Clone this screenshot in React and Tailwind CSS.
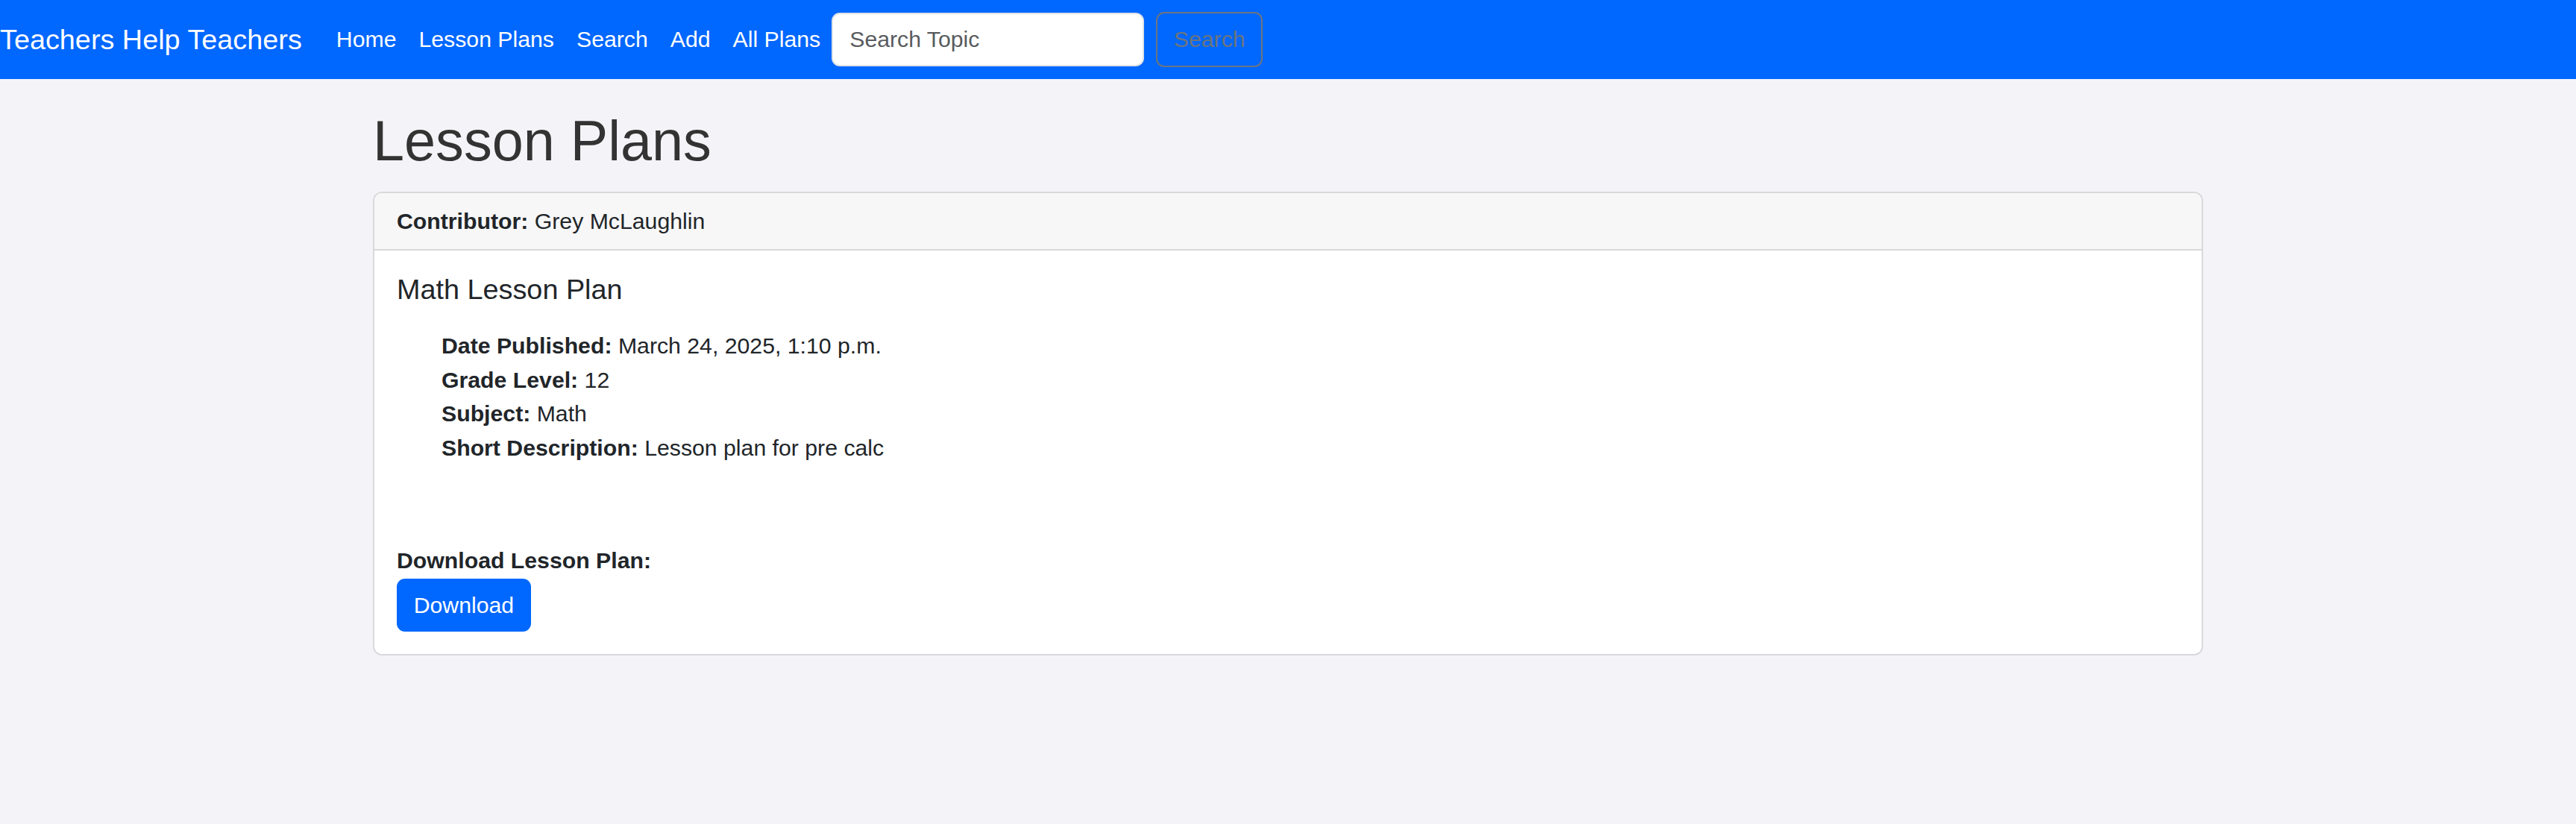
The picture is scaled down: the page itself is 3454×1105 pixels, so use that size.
import React from 'react';

const links = ['Home', 'Lesson Plans', 'Search', 'Add', 'All Plans'];

const details = [
  ['Date Published:', 'March 24, 2025, 1:10 p.m.'],
  ['Grade Level:', '12'],
  ['Subject:', 'Math'],
  ['Short Description:', 'Lesson plan for pre calc'],
];

export default function App() {
  return (
    <div className="min-h-screen bg-[#f4f4f8] text-[#212529] font-['Liberation_Sans',Arial,sans-serif]">
      {/* NAVBAR */}
      <nav className="h-[106px] bg-[#0067ff] flex items-center">
        <a href="#" className="text-[37.8px] leading-[56.7px] text-white mr-[31px] whitespace-nowrap">
          Teachers Help Teachers
        </a>
        <ul className="flex items-center">
          {links.map(l => (
            <li key={l}>
              <a href="#" className="block px-[15px] text-[30.24px] leading-[45.4px] text-white whitespace-nowrap">{l}</a>
            </li>
          ))}
        </ul>
        <form className="flex items-center" onSubmit={e => e.preventDefault()}>
          <input type="text" placeholder="Search Topic"
            className="w-[419px] h-[72px] bg-white rounded-[11px] border-[2px] border-[#dee2e6] px-[22px] text-[30.24px] text-[#212529] placeholder-[#595c5f] outline-none" />
          <button type="submit"
            className="ml-[16px] w-[143px] h-[74px] rounded-[11px] border-[2px] border-[#6c757d] text-[30.24px] text-[#6c757d] bg-transparent">
            Search
          </button>
        </form>
      </nav>

      {/* CONTENT */}
      <main className="max-w-[2496px] mx-auto px-[21px]">
        <h1 className="mt-[38px] mb-[22px] text-[75.6px] leading-[1.2] text-[#333]">Lesson Plans</h1>

        <div className="bg-white border-[2px] border-[#d9d9dc] rounded-[12px] overflow-hidden">
          <div className="bg-[#f7f7f7] border-b-[2px] border-[#d9d9dc] px-[30px] py-[15px] text-[30.24px] leading-[45.4px]">
            <strong className="font-bold">Contributor:</strong> Grey McLaughlin
          </div>
          <div className="px-[30px] pt-[30px] pb-[30px] text-[30.24px] leading-[45.4px]">
            <h5 className="text-[37.8px] leading-[1.2] mb-[30px]">Math Lesson Plan</h5>
            <ul className="pl-[60px] mb-[106px]">
              {details.map(([k, v]) => (
                <li key={k}><strong className="font-bold">{k}</strong> {v}</li>
              ))}
            </ul>
            <p className="font-bold">Download Lesson Plan:</p>
            <button className="mt-[2px] h-[71px] px-[22.7px] rounded-[11px] bg-[#0067ff] text-white text-[30.24px]">
              Download
            </button>
          </div>
        </div>
      </main>
    </div>
  );
}
